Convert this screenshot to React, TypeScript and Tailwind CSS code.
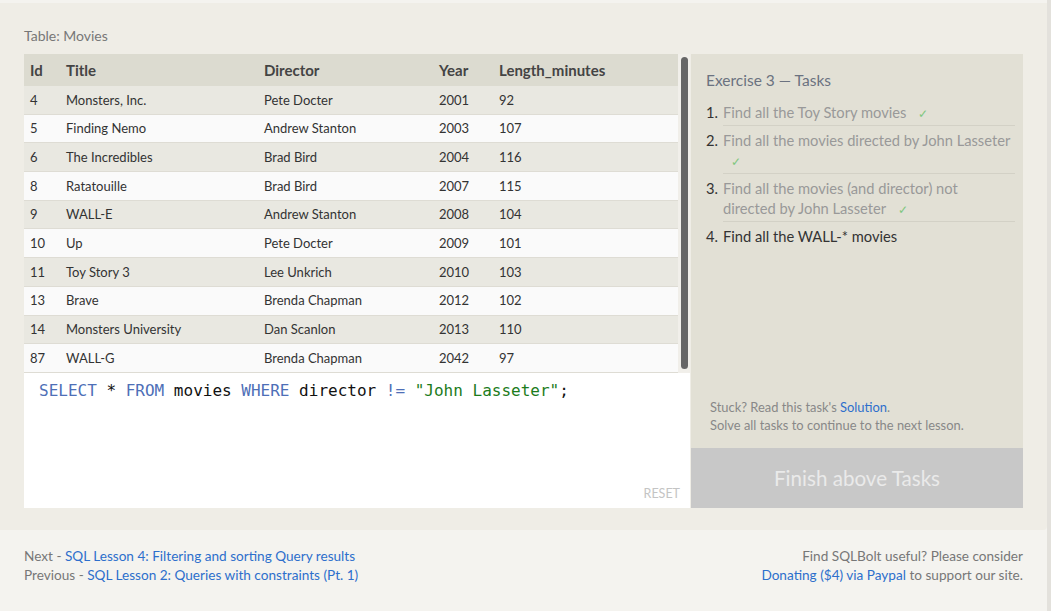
import React from "react";

const MOVIES = [
  { id: 4, title: "Monsters, Inc.", director: "Pete Docter", year: 2001, len: 92 },
  { id: 5, title: "Finding Nemo", director: "Andrew Stanton", year: 2003, len: 107 },
  { id: 6, title: "The Incredibles", director: "Brad Bird", year: 2004, len: 116 },
  { id: 8, title: "Ratatouille", director: "Brad Bird", year: 2007, len: 115 },
  { id: 9, title: "WALL-E", director: "Andrew Stanton", year: 2008, len: 104 },
  { id: 10, title: "Up", director: "Pete Docter", year: 2009, len: 101 },
  { id: 11, title: "Toy Story 3", director: "Lee Unkrich", year: 2010, len: 103 },
  { id: 13, title: "Brave", director: "Brenda Chapman", year: 2012, len: 102 },
  { id: 14, title: "Monsters University", director: "Dan Scanlon", year: 2013, len: 110 },
  { id: 87, title: "WALL-G", director: "Brenda Chapman", year: 2042, len: 97 },
];

const Check = () => <span className="ml-[8px] text-[12px] leading-none text-[#7fc77f]">✓</span>;

function Task({ n, done, children, last }: { n: number; done?: boolean; children: React.ReactNode; last?: boolean }) {
  return (
    <li className="flex">
      <span className="w-[17px] shrink-0 pt-[4px] text-[#333]">{n}.</span>
      <div
        className={`flex-1 pb-[3px] pt-[4px] ${last ? "" : "border-b border-[#d3d1c6]"} ${
          done ? "text-[#999]" : "text-[#333]"
        }`}
      >
        {children}
      </div>
    </li>
  );
}

export default function App() {
  return (
    <div className="flex min-h-[611px] bg-[#f4f3ef] font-['Lato','Liberation_Sans',sans-serif]">
      <div className="w-[1047px]">
        {/* main panel */}
        <div className="mt-[3px] h-[527px] rounded-br-[4px] bg-[#efede6] px-[24px] pt-[23px]">
          <div className="mb-[8px] text-[14px] leading-[20px] text-[#777]">Table: Movies</div>

          <div className="flex h-[454px] gap-[1px]">
            {/* left: table + editor */}
            <div className="flex w-[666px] flex-col">
              <div className="flex h-[319px] overflow-hidden">
                <div className="w-[654px] text-[13px] text-[#333]">
                  <div className="flex h-[32px] items-center bg-[#dcdbd0] text-[15px] font-bold text-[#444]">
                    <div className="w-[42px] pl-[6px]">Id</div>
                    <div className="w-[198px]">Title</div>
                    <div className="w-[175px]">Director</div>
                    <div className="w-[60px]">Year</div>
                    <div>Length_minutes</div>
                  </div>
                  {MOVIES.map((m, i) => (
                    <div
                      key={m.id}
                      className={`flex h-[28.7px] items-center border-b border-[#dedcd4] pt-[1px] ${
                        i % 2 === 0 ? "bg-[#e9e8e1]" : "bg-[#fafafa]"
                      }`}
                    >
                      <div className="w-[42px] pl-[6px]">{m.id}</div>
                      <div className="w-[198px]">{m.title}</div>
                      <div className="w-[175px]">{m.director}</div>
                      <div className="w-[60px]">{m.year}</div>
                      <div>{m.len}</div>
                    </div>
                  ))}
                </div>
                <div className="flex w-[12px] justify-center bg-[#f1efea] py-[3px]">
                  <div className="h-[312px] w-[7px] rounded-[4px] bg-[#666]" />
                </div>
              </div>

              {/* editor */}
              <div className="relative flex-1 bg-white pl-[15px] pt-[8px]">
                <div className="font-['DejaVu_Sans_Mono',monospace] text-[16px] leading-[20px] text-[#111]">
                  <span className="text-[#4e6fb7]">SELECT</span> * <span className="text-[#4e6fb7]">FROM</span> movies{" "}
                  <span className="text-[#4e6fb7]">WHERE</span> director <span className="text-[#4e6fb7]">!=</span>{" "}
                  <span className="text-[#1c7c1c]">"John Lasseter"</span>;
                </div>
                <div className="absolute bottom-[4px] right-[10px] text-[12.5px] text-[#c4c4c4]">RESET</div>
              </div>
            </div>

            {/* right: tasks */}
            <div className="flex w-[333px] flex-col bg-[#e2e0d5]">
              <div className="px-[15px] pr-[8px] pt-[16px]">
                <div className="mb-[8px] text-[15.5px] leading-[20px] text-[#6b7280]">Exercise 3 — Tasks</div>
                <ol className="text-[14.7px] leading-[20px]">
                  <Task n={1} done>
                    Find all the Toy Story movies <Check />
                  </Task>
                  <Task n={2} done>
                    Find all the movies directed by John Lasseter
                    <br />
                    <Check />
                  </Task>
                  <Task n={3} done>
                    Find all the movies (and director) not
                    <br />
                    directed by John Lasseter <Check />
                  </Task>
                  <Task n={4} last>
                    Find all the WALL-* movies
                  </Task>
                </ol>
              </div>
              <div className="flex-1" />
              <div className="px-[19px] pb-[14px] text-[12.9px] leading-[18px] text-[#888]">
                <div>
                  Stuck? Read this task's <span className="text-[#2d6fcc]">Solution</span>.
                </div>
                <div>Solve all tasks to continue to the next lesson.</div>
              </div>
              <div className="flex h-[60px] items-center justify-center bg-[#c8c8c8] text-[20.6px] text-[#eaeaea]">
                Finish above Tasks
              </div>
            </div>
          </div>
        </div>

        {/* footer */}
        <div className="flex justify-between px-[24px] pt-[17px] text-[13.6px] leading-[19px] text-[#777]">
          <div>
            <div>
              Next - <span className="text-[#2d6fcc]">SQL Lesson 4: Filtering and sorting Query results</span>
            </div>
            <div>
              Previous - <span className="text-[#2d6fcc]">SQL Lesson 2: Queries with constraints (Pt. 1)</span>
            </div>
          </div>
          <div className="text-right">
            <div>Find SQLBolt useful? Please consider</div>
            <div>
              <span className="text-[#2d6fcc]">Donating ($4) via Paypal</span> to support our site.
            </div>
          </div>
        </div>
      </div>
      <div className="w-[4px] bg-[#e3e1dc]" />
    </div>
  );
}
